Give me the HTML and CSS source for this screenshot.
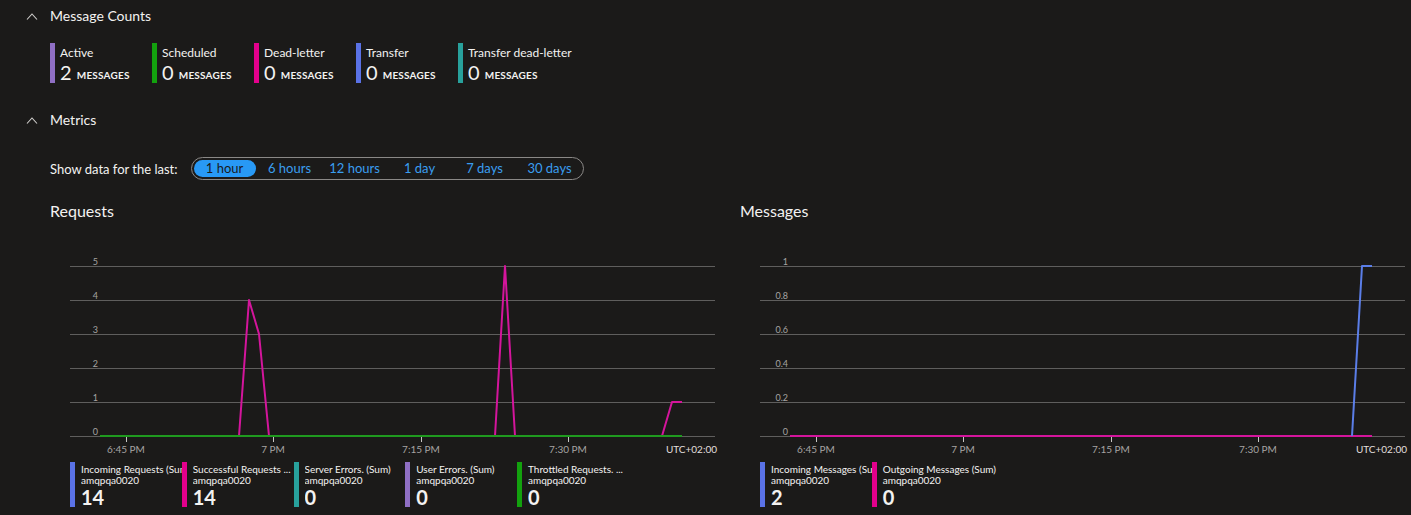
FILE: index.html
```html
<!DOCTYPE html>
<html>
<head>
<meta charset="utf-8">
<link rel="stylesheet" href="styles.css">
</head>
<body>
<div class="page">
  <div class="section-head">
    <svg class="chev" width="12" height="8" viewBox="0 0 12 8"><path d="M1 7.5 L6 2 L11 7.5"/></svg>
    <span>Message Counts</span>
  </div>
  <div class="counts">
    <div class="count"><span class="cbar c-active"></span><div><div class="clabel">Active</div><div class="cval">2 <span class="unit">Messages</span></div></div></div>
    <div class="count"><span class="cbar c-sched"></span><div><div class="clabel">Scheduled</div><div class="cval">0 <span class="unit">Messages</span></div></div></div>
    <div class="count"><span class="cbar c-dead"></span><div><div class="clabel">Dead-letter</div><div class="cval">0 <span class="unit">Messages</span></div></div></div>
    <div class="count"><span class="cbar c-transfer"></span><div><div class="clabel">Transfer</div><div class="cval">0 <span class="unit">Messages</span></div></div></div>
    <div class="count"><span class="cbar c-tdead"></span><div><div class="clabel">Transfer dead-letter</div><div class="cval">0 <span class="unit">Messages</span></div></div></div>
  </div>

  <div class="section-head metrics-head">
    <svg class="chev" width="12" height="8" viewBox="0 0 12 8"><path d="M1 7.5 L6 2 L11 7.5"/></svg>
    <span>Metrics</span>
  </div>

  <div class="filter">
    <span class="filter-label">Show data for the last:</span>
    <div class="pill">
      <span class="opt sel">1 hour</span>
      <span class="opt">6 hours</span>
      <span class="opt">12 hours</span>
      <span class="opt">1 day</span>
      <span class="opt">7 days</span>
      <span class="opt">30 days</span>
    </div>
  </div>

  <div class="charts">
    <div class="chart">
      <div class="chart-title">Requests</div>
      <svg class="plot" width="670" height="205" viewBox="0 0 670 205">
        <g class="grid">
          <line x1="20" y1="16.5" x2="665" y2="16.5"/>
          <line x1="20" y1="50.5" x2="665" y2="50.5"/>
          <line x1="20" y1="84.5" x2="665" y2="84.5"/>
          <line x1="20" y1="118.5" x2="665" y2="118.5"/>
          <line x1="20" y1="152.5" x2="665" y2="152.5"/>
          <line x1="20" y1="186.5" x2="665" y2="186.5"/>
        </g>
        <g class="ylab">
          <text x="48" y="14.5">5</text>
          <text x="48" y="48.5">4</text>
          <text x="48" y="82.5">3</text>
          <text x="48" y="116.5">2</text>
          <text x="48" y="150.5">1</text>
          <text x="48" y="184.5">0</text>
        </g>
        <g class="ticks">
          <line x1="76.5" y1="187" x2="76.5" y2="192"/>
          <line x1="223.5" y1="187" x2="223.5" y2="192"/>
          <line x1="371.5" y1="187" x2="371.5" y2="192"/>
          <line x1="518.5" y1="187" x2="518.5" y2="192"/>
        </g>
        <g class="xlab">
          <text x="76" y="203">6:45 PM</text>
          <text x="223" y="203">7 PM</text>
          <text x="371" y="203">7:15 PM</text>
          <text x="518" y="203">7:30 PM</text>
        </g>
        <text class="tz" x="667" y="203">UTC+02:00</text>
        <polyline class="ln magenta" points="189,186 199,50 209,84 219,186"/>
        <polyline class="ln magenta" points="445,186 455,16 465,186"/>
        <polyline class="ln magenta" points="612,186 622,152 632,152"/>
        <polyline class="ln green" points="50,186 632,186"/>
      </svg>
      <div class="legend">
        <div class="litem"><span class="lbar c-transfer"></span><div class="ltext"><div class="lname">Incoming Requests (Sum)</div><div class="lsub">amqpqa0020</div><div class="lval">14</div></div></div>
        <div class="litem"><span class="lbar c-dead"></span><div class="ltext"><div class="lname">Successful Requests ...</div><div class="lsub">amqpqa0020</div><div class="lval">14</div></div></div>
        <div class="litem"><span class="lbar c-tdead"></span><div class="ltext"><div class="lname">Server Errors. (Sum)</div><div class="lsub">amqpqa0020</div><div class="lval">0</div></div></div>
        <div class="litem"><span class="lbar c-active"></span><div class="ltext"><div class="lname">User Errors. (Sum)</div><div class="lsub">amqpqa0020</div><div class="lval">0</div></div></div>
        <div class="litem"><span class="lbar c-sched"></span><div class="ltext"><div class="lname">Throttled Requests. ...</div><div class="lsub">amqpqa0020</div><div class="lval">0</div></div></div>
      </div>
    </div>

    <div class="chart">
      <div class="chart-title">Messages</div>
      <svg class="plot" width="670" height="205" viewBox="0 0 670 205">
        <g class="grid">
          <line x1="20" y1="16.5" x2="665" y2="16.5"/>
          <line x1="20" y1="50.5" x2="665" y2="50.5"/>
          <line x1="20" y1="84.5" x2="665" y2="84.5"/>
          <line x1="20" y1="118.5" x2="665" y2="118.5"/>
          <line x1="20" y1="152.5" x2="665" y2="152.5"/>
          <line x1="20" y1="186.5" x2="665" y2="186.5"/>
        </g>
        <g class="ylab">
          <text x="48" y="14.5">1</text>
          <text x="48" y="48.5">0.8</text>
          <text x="48" y="82.5">0.6</text>
          <text x="48" y="116.5">0.4</text>
          <text x="48" y="150.5">0.2</text>
          <text x="48" y="184.5">0</text>
        </g>
        <g class="ticks">
          <line x1="76.5" y1="187" x2="76.5" y2="192"/>
          <line x1="223.5" y1="187" x2="223.5" y2="192"/>
          <line x1="371.5" y1="187" x2="371.5" y2="192"/>
          <line x1="518.5" y1="187" x2="518.5" y2="192"/>
        </g>
        <g class="xlab">
          <text x="76" y="203">6:45 PM</text>
          <text x="223" y="203">7 PM</text>
          <text x="371" y="203">7:15 PM</text>
          <text x="518" y="203">7:30 PM</text>
        </g>
        <text class="tz" x="667" y="203">UTC+02:00</text>
        <polyline class="ln magenta" points="50,186 632,186"/>
        <polyline class="ln blue" points="612,186 622,16 632,16"/>
      </svg>
      <div class="legend">
        <div class="litem"><span class="lbar c-transfer"></span><div class="ltext"><div class="lname">Incoming Messages (Sum)</div><div class="lsub">amqpqa0020</div><div class="lval">2</div></div></div>
        <div class="litem"><span class="lbar c-dead"></span><div class="ltext"><div class="lname">Outgoing Messages (Sum)</div><div class="lsub">amqpqa0020</div><div class="lval">0</div></div></div>
      </div>
    </div>
  </div>
</div>
</body>
</html>
```

FILE: styles.css
```css
html, body {
  margin: 0;
  padding: 0;
  background: #1b1a19;
}
body {
  font-family: "Segoe UI", Lato, "Noto Sans", sans-serif;
  color: #f3f2f1;
  width: 1411px;
  height: 515px;
  overflow: hidden;
}
.page {
  display: flex;
  flex-direction: column;
}
.section-head {
  display: flex;
  align-items: center;
  height: 31px;
  padding-left: 26px;
  gap: 12px;
  font-size: 14px;
}
.chev {
  display: block;
}
.chev path {
  fill: none;
  stroke: #d2d0ce;
  stroke-width: 1.1;
}
.counts {
  display: flex;
  margin-top: 12px;
  padding-left: 50px;
}
.count {
  display: flex;
  width: 102px;
  height: 40px;
  flex: none;
  white-space: nowrap;
}
.count:last-child {
  width: auto;
}
.cbar {
  width: 5px;
  height: 40px;
  margin-right: 5px;
  flex: none;
}
.c-active { background: #8f6fc4; }
.c-sched { background: #13a10e; }
.c-dead { background: #e3008c; }
.c-transfer { background: #5a72e6; }
.c-tdead { background: #28a19c; }
.clabel {
  font-size: 12px;
  line-height: 19px;
  height: 19px;
}
.cval {
  font-size: 20px;
  line-height: 21px;
  height: 21px;
  font-weight: 400;
}
.unit {
  font-size: 10px;
  font-weight: 700;
  text-transform: uppercase;
  letter-spacing: 0.2px;
  vertical-align: 1px;
}
.metrics-head {
  margin-top: 21px;
}
.filter {
  display: flex;
  align-items: center;
  margin-top: 22px;
  padding-left: 50px;
  gap: 13px;
  font-size: 13px;
}
.pill {
  display: flex;
  gap: 3px;
  padding: 2px;
  border: 1px solid #8a8886;
  border-radius: 12px;
}
.opt {
  width: 62px;
  height: 17px;
  line-height: 17px;
  text-align: center;
  color: #3a9ef0;
  border-radius: 9px;
}
.opt.sel {
  background: #2899f5;
  color: #1b1a19;
}
.charts {
  display: grid;
  grid-template-columns: 690px 1fr;
  padding-left: 50px;
  margin-top: 20px;
}
.chart-title {
  font-size: 16px;
  line-height: 21px;
}
.plot {
  display: block;
  margin-top: 29px;
}
.grid line {
  stroke: #5f5e5d;
  stroke-width: 1;
}
.ticks line {
  stroke: #c8c6c4;
  stroke-width: 1;
}
.ylab text {
  font-size: 9px;
  fill: #a6a4a2;
  text-anchor: end;
}
.xlab text {
  font-size: 10px;
  fill: #a6a4a2;
  text-anchor: middle;
}
.tz {
  font-size: 10px;
  fill: #e1dfdd;
  text-anchor: end;
}
.ln {
  fill: none;
  stroke-width: 2;
  stroke-linejoin: round;
}
.magenta { stroke: #d4159c; }
.green { stroke: #1f9a1f; }
.blue { stroke: #5b7ee8; }
.legend {
  display: flex;
  margin-top: 7px;
  padding-left: 20px;
}
.litem {
  display: flex;
  width: 111.75px;
  flex: none;
  overflow: hidden;
  white-space: nowrap;
}
.litem:last-child {
  width: auto;
  overflow: visible;
}
.lbar {
  width: 5px;
  height: 45px;
  margin-right: 6px;
  flex: none;
}
.ltext {
  overflow: hidden;
  padding-top: 2px;
}
.litem:last-child .ltext {
  overflow: visible;
}
.lname, .lsub {
  font-size: 10px;
  line-height: 11px;
}
.lval {
  font-size: 20px;
  line-height: 23px;
  font-weight: 700;
}
```
